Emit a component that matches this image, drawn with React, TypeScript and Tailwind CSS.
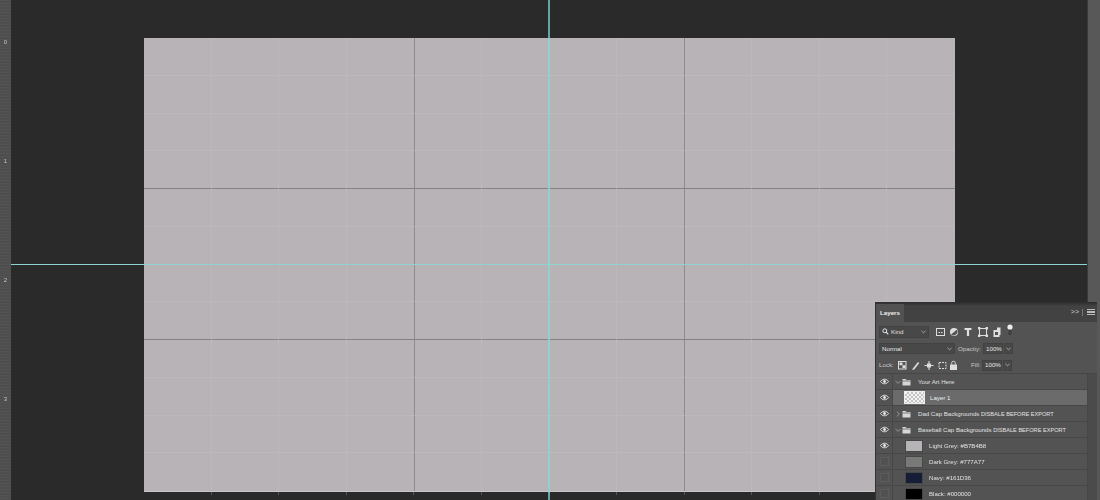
import React from "react";

const idx = Array.from({ length: 12 }, (_, i) => i);
const Eye = () => (
  <svg width="9" height="7" viewBox="0 0 18 14" className="shrink-0">
    <path d="M1 7 C5 1 13 1 17 7 C13 13 5 13 1 7Z" fill="none" stroke="#e8e8e8" strokeWidth="2" />
    <circle cx="9" cy="7" r="2.8" fill="#e8e8e8" />
  </svg>
);
const Folder = () => (
  <svg width="9" height="8" viewBox="0 0 18 16" className="shrink-0">
    <path d="M1 2h6l2 2h8v11H1z" fill="#d6d6d6" />
    <path d="M1 6h16" stroke="#555" strokeWidth="1.4" />
  </svg>
);
const Chev = ({ open }: { open?: boolean }) => (
  <svg width="6" height="6" viewBox="0 0 6 6" className="shrink-0">
    <path d={open ? "M0.5 1.8 L3 4.4 L5.5 1.8" : "M1.8 0.5 L4.4 3 L1.8 5.5"} fill="none" stroke="#aaa" strokeWidth="0.8" />
  </svg>
);
const Checker = () => (
  <div className="w-[21px] h-[13px] border border-[#eee] bg-[repeating-conic-gradient(#c4c4c4_0_25%,#f4f4f4_0_50%)] bg-[length:4px_4px]" />
);
const Row = ({ eye = true, selected = false, children }: { eye?: boolean; selected?: boolean; children: React.ReactNode }) => (
  <div className="flex h-4 border-b border-[#474747] shrink-0">
    <div className="w-[17px] flex items-center justify-center border-r border-[#474747]">
      {eye ? <Eye /> : <div className="w-[9px] h-[9px] border border-[#5c5c5c] bg-[#515151]" />}
    </div>
    <div className={`flex-1 flex items-center text-[6.1px] ${selected ? "bg-[#6b6b6b] text-[#f0f0f0]" : "text-[#e2e2e2]"}`}>{children}</div>
  </div>
);
const Swatch = ({ color, label }: { color: string; label: string }) => (
  <Row eye={color === "#b7b4b8"}>
    <div className="w-[18px] h-[12px] ml-[12px] mr-[6px] border border-[#484848]" style={{ backgroundColor: color }} />
    <span>{label}</span>
  </Row>
);
const Caret = () => (
  <svg width="5" height="4" viewBox="0 0 6 4" className="shrink-0">
    <path d="M0.5 0.5 L3 3 L5.5 0.5" fill="none" stroke="#cfcfcf" strokeWidth="0.8" />
  </svg>
);
const Field = ({ w, children }: { w: string; children: React.ReactNode }) => (
  <div className={`h-[11px] ${w} bg-[#484848] border border-[#424242] flex items-center justify-between px-[2px] text-[6.2px] text-[#e6e6e6]`}>{children}</div>
);

export default function App() {
  return (
    <div className="relative w-[1100px] h-[500px] overflow-hidden flex bg-[#2a2a2a] font-['Liberation_Sans',sans-serif]">
      {/* left ruler */}
      <div className="w-[11px] h-full shrink-0 bg-[#4e4e4e] bg-[repeating-linear-gradient(to_bottom,#535353_0_1px,transparent_1px_3px)] text-[6px] text-[#c4c4c4] flex flex-col items-center pt-[38px] blur-[0.3px]">
        <span className="h-[119px] leading-[8px]">0</span>
        <span className="h-[119px] leading-[8px]">1</span>
        <span className="h-[119px] leading-[8px]">2</span>
        <span className="h-[100px] leading-[8px]">3</span>
      </div>

      {/* document area */}
      <div className="flex-1 pl-[133px] pt-[38px]">
        <div className="w-[811px] h-[453px] bg-[#b8b3b6] grid grid-cols-12 grid-rows-12 shadow-[0_1px_0_#c9c6c9]">
          {idx.map((r) =>
            idx.map((c) => (
              <div
                key={`${r}-${c}`}
                className={`${c === 11 || c === 3 ? "" : c === 7 ? "border-r border-r-[#8e8b8f]" : "border-r border-r-[#bcb8bb]"} ${c === 4 ? "border-l border-l-[#8e8b8f]" : ""} ${r === 11 ? "" : r === 3 || r === 7 ? "border-b border-b-[#858286]" : "border-b border-b-[#bcb8bb]"}`}
              />
            ))
          )}
        </div>
        <div className="w-[811px] h-[3px] mt-px grid grid-cols-12">
          {idx.map((c) => (
            <div key={c} className={c === 11 ? "" : "border-r border-r-[#555]"} />
          ))}
        </div>
      </div>

      {/* right strip */}
      <div className="w-[13px] h-full shrink-0 bg-[#585858] border-l border-[#3a3a3a]" />

      {/* guides */}
      <div className="absolute left-[548px] top-0 w-[2px] h-[500px] bg-[#7fdcd6]/70" />
      <div className="absolute left-[11px] top-[264px] w-[1076px] h-px bg-[#8fd3d0]" />

      {/* Layers panel */}
      <div className="absolute left-[875px] top-[302px] w-[222px] h-[198px] bg-[#535353] border-l border-[#333] flex flex-col text-[#e0e0e0] blur-[0.3px]">
        <div className="h-[20px] bg-[linear-gradient(#2c2c2c_0,#424242_4px)] flex items-stretch justify-between shrink-0">
          <div className="w-[28px] mt-[2px] bg-[#525252] text-[6.2px] font-bold flex items-center justify-center text-[#efefef]">Layers</div>
          <div className="flex items-center gap-[3px] pr-[2px] text-[7px] text-[#d0d0d0]">
            <span>&gt;&gt;</span>
            <div className="w-px h-[7px] bg-[#777]" />
            <div className="w-[8px] h-[6px] ml-[1px] border-y border-[#bbb] bg-[linear-gradient(#bbb,#bbb)] bg-[length:100%_2px] bg-center bg-no-repeat" />
          </div>
        </div>

        <div className="h-[17px] flex items-center pl-[3px] gap-[5px] shrink-0 mt-[1px]">
          <div className="w-[50px] h-[12px] bg-[#484848] border border-[#424242] flex items-center px-[2px] gap-[2px] text-[6.2px]">
            <svg width="7" height="7" viewBox="0 0 10 10" className="shrink-0">
              <circle cx="4" cy="4" r="2.8" fill="none" stroke="#e8e8e8" strokeWidth="1.4" />
              <path d="M6 6 L9 9" stroke="#e8e8e8" strokeWidth="1.6" />
            </svg>
            <span className="flex-1">Kind</span>
            <Caret />
          </div>
          <svg width="84" height="15" viewBox="0 0 84 15" className="shrink-0">
            <rect x="2.5" y="4.5" width="8" height="7" fill="none" stroke="#ddd" strokeWidth="1" />
            <path d="M4.5 8.5h1.5M7 8.5h1.5" stroke="#ddd" strokeWidth="1" />
            <circle cx="20" cy="8" r="4" fill="#ddd" />
            <path d="M23 5.5 A4 4 0 0 1 17 10.5Z" fill="#555" />
            <path d="M30.5 4h7v2h-2.4v6h-2.2V6h-2.4z" fill="#e0e0e0" />
            <rect x="45.5" y="4.5" width="7" height="7" fill="none" stroke="#ddd" strokeWidth="1" />
            <path d="M44 3h2.4v2.4H44zM51.6 3H54v2.4h-2.4zM44 10.6h2.4V13H44zM51.6 10.6H54V13h-2.4z" fill="#ddd" />
            <path d="M59.5 6h3.5V3.5h3.5V11h-1v2h-6z" fill="#e0e0e0" />
            <rect x="61" y="8" width="3" height="3" fill="#555" />
            <circle cx="76" cy="3" r="2.6" fill="#eee" />
            <rect x="74.5" y="6" width="3" height="5" fill="#3f3f3f" />
          </svg>
        </div>

        <div className="h-[17px] flex items-center pl-[3px] shrink-0">
          <Field w="w-[76px]"><span>Normal</span><Caret /></Field>
          <span className="text-[6.2px] text-[#c8c8c8] w-[28px] pl-[3px]">Opacity:</span>
          <Field w="w-[20px]"><span>100%</span></Field>
          <Field w="w-[9px] ml-[1px] !justify-center !px-0"><Caret /></Field>
        </div>

        <div className="h-[17px] flex items-center pl-[3px] border-b border-[#474747] shrink-0">
          <span className="text-[6.2px] text-[#c8c8c8] w-[19px]">Lock:</span>
          <svg width="64" height="11" viewBox="0 0 64 11" className="shrink-0">
            <rect x="0.5" y="1.5" width="7.5" height="7.5" fill="none" stroke="#ddd" strokeWidth="1" />
            <path d="M1.5 2.5h3V5.3h-3zM4.5 5.3h3V8h-3z" fill="#ddd" />
            <path d="M14 9.5 L20 2 L21.3 3 L16 9.8Z" fill="#ddd" />
            <path d="M31 1v9M26.5 5.5h9" stroke="#ddd" strokeWidth="1.1" />
            <rect x="29" y="3.5" width="4" height="4" fill="#ddd" />
            <rect x="41" y="2.5" width="7" height="6" fill="none" stroke="#ddd" strokeWidth="1" strokeDasharray="2 1" />
            <rect x="52" y="4.5" width="7" height="5.5" fill="#ddd" />
            <path d="M53.7 4.5V3a1.8 1.8 0 0 1 3.6 0v1.5" fill="none" stroke="#ddd" strokeWidth="0.9" />
          </svg>
          <span className="text-[6.2px] text-[#c8c8c8] ml-[9px] w-[11px]">Fill:</span>
          <Field w="w-[20px]"><span>100%</span></Field>
          <Field w="w-[9px] ml-[1px] !justify-center !px-0"><Caret /></Field>
        </div>

        <div className="flex flex-1 min-h-0">
          <div className="flex-1 flex flex-col min-w-0">
            <Row>
              <div className="w-[6px] ml-[2px] mr-[1px]"><Chev open /></div>
              <Folder />
              <span className="ml-[7px]">Your Art Here</span>
            </Row>
            <Row selected>
              <div className="w-[11px]" />
              <Checker />
              <span className="ml-[5px]">Layer 1</span>
            </Row>
            <Row>
              <div className="w-[6px] ml-[2px] mr-[1px]"><Chev /></div>
              <Folder />
              <span className="ml-[7px]">Dad Cap Backgrounds <span className="text-[5.6px]">DISBALE BEFORE EXPORT</span></span>
            </Row>
            <Row>
              <div className="w-[6px] ml-[2px] mr-[1px]"><Chev open /></div>
              <Folder />
              <span className="ml-[7px]">Baseball Cap Backgrounds <span className="text-[5.6px]">DISBALE BEFORE EXPORT</span></span>
            </Row>
            <Swatch color="#b7b4b8" label="Light Grey: #B7B4B8" />
            <Swatch color="#777a77" label="Dark Grey: #777A77" />
            <Swatch color="#161d36" label="Navy: #161D36" />
            <Swatch color="#000000" label="Black: #000000" />
          </div>
          <div className="w-[10px] shrink-0 bg-[#4b4b4b] border-l border-[#474747]" />
        </div>
      </div>
    </div>
  );
}
